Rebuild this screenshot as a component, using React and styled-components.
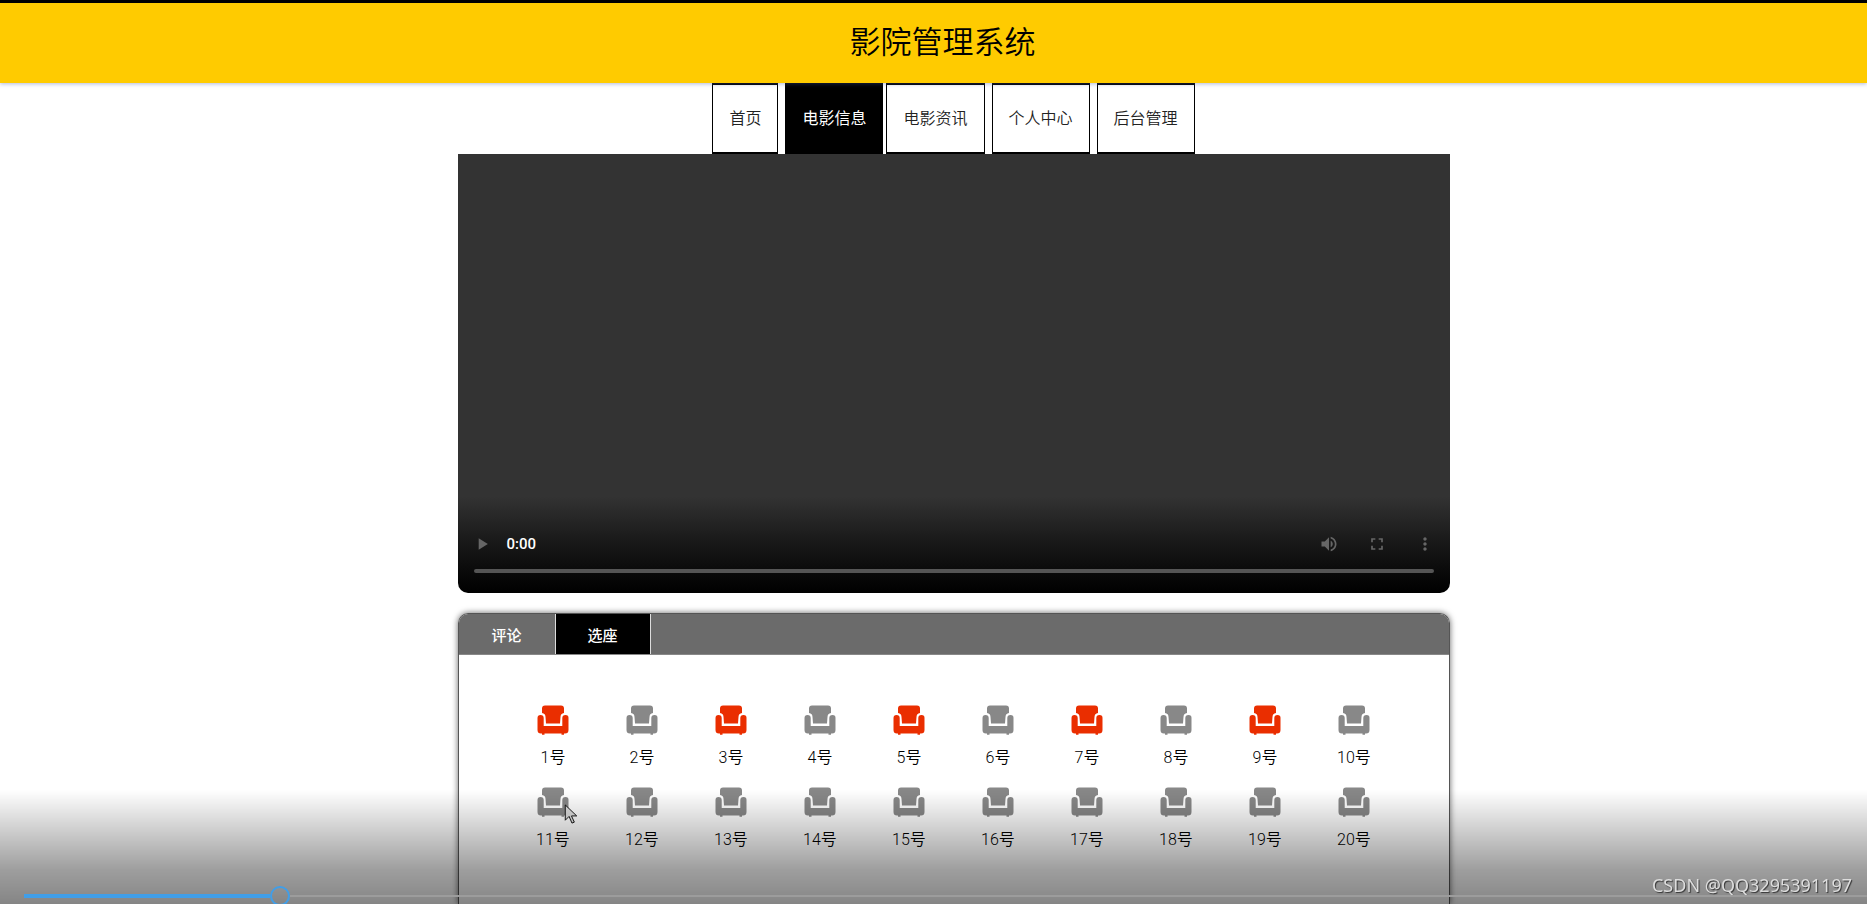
import React, { useState } from "react";
import styled, { createGlobalStyle } from "styled-components";

const GlobalStyle = createGlobalStyle`
  * {
    box-sizing: border-box;
  }
  body {
    margin: 0;
    background: #fff;
    color: #000;
    font-family: "Liberation Sans", "Noto Sans CJK SC", sans-serif;
    font-size: 16px;
    font-weight: 350;
  }
  button, input {
    font: inherit;
  }
`;

const Page = styled.div`
  display: flex;
  flex-direction: column;
  min-height: 100vh;
`;

const Header = styled.header`
  position: relative;
  z-index: 1;
  height: 83px;
  padding-left: 18px;
  display: flex;
  align-items: center;
  justify-content: center;
  background: #ffcb00;
  border-top: 3px solid #000;
  box-shadow: 0 1px 4px rgba(60, 80, 160, 0.4);
`;

const Title = styled.h1`
  margin: 0;
  font-size: 31px;
  line-height: 40px;
  font-weight: 350;
`;

const Nav = styled.nav`
  display: flex;
  justify-content: center;
  gap: 7px;
  padding-left: 40px;
`;

const NavLink = styled.a`
  padding: 0 16px;
  border: 2px solid #000;
  border-width: 2px 1px;
  margin-right: ${({ $active }) => ($active ? "-4px" : "0")};
  background: ${({ $active }) => ($active ? "#000" : "#fff")};
  color: ${({ $active }) => ($active ? "#fff" : "#222")};
  font-weight: ${({ $active }) => ($active ? "400" : "350")};
  line-height: 67px;
  text-decoration: none;
`;

const Content = styled.main`
  flex: 1;
  display: flex;
  flex-direction: column;
  gap: 20px;
  width: 100%;
  max-width: 1032px;
  margin: 0 auto;
  padding-left: 40px;
`;

const Player = styled.section`
  display: flex;
  flex-direction: column;
  justify-content: flex-end;
  height: 439px;
  padding: 0 14px 20px;
  border-radius: 0 0 10px 10px;
  background: linear-gradient(#333 78%, #1c1c1c 87%, #0c0c0c 94%, #000);
`;

const Controls = styled.div`
  display: flex;
  align-items: center;
  height: 50px;
  padding-right: 1px;
`;

const Time = styled.span`
  flex: 1;
  margin-left: 15px;
  color: #fff;
  font-family: Roboto, sans-serif;
  font-size: 15px;
  font-weight: 500;
`;

const IconButton = styled.button`
  display: flex;
  padding: 0;
  margin-left: ${({ $spaced }) => ($spaced ? "28px" : "0")};
  border: 0;
  background: none;
  color: #666;
`;

const Timeline = styled.input`
  appearance: none;
  display: block;
  height: 4px;
  margin: 0 2px;
  border-radius: 2px;
  background: #555;
  &::-webkit-slider-thumb {
    appearance: none;
    width: 0;
  }
`;

const Panel = styled.section`
  flex: 1;
  border: 1px solid #555;
  border-bottom: 0;
  border-radius: 10px 10px 0 0;
  box-shadow: 0 0 6px rgba(0, 0, 0, 0.6);
  overflow: hidden;
`;

const Tabs = styled.div`
  display: flex;
  height: 41px;
  background: #6b6b6b;
  border-bottom: 1px solid #888;
`;

const Tab = styled.button`
  flex: 0 1 ${({ $active }) => ($active ? "95px" : "97px")};
  padding: 0;
  border: 0;
  border-right: 1px solid #ddd;
  background: ${({ $active }) => ($active ? "#000" : "transparent")};
  color: #fff;
  font-size: 15px;
  font-weight: 500;
`;

const Seats = styled.div`
  display: grid;
  grid-template-columns: repeat(10, 1fr);
  row-gap: 18px;
  padding: 49px 50px;
`;

const Seat = styled.button`
  position: relative;
  display: flex;
  flex-direction: column;
  align-items: center;
  gap: 12px;
  padding: 0;
  border: 0;
  background: none;
  color: #000;
  font-family: Roboto, "Noto Sans CJK SC", sans-serif;
  line-height: 20px;
`;

const SeatIcon = styled.svg`
  width: 32px;
  height: 32px;
  fill: ${({ $taken }) => ($taken ? "#ea2e00" : "#888")};
`;

const Pointer = styled.svg`
  position: absolute;
  top: 18px;
  left: 55px;
  width: 14px;
  height: 21px;
`;

const Shade = styled.footer`
  position: fixed;
  inset: auto 0 0 0;
  z-index: 2;
  height: 114px;
  overflow: hidden;
  background: linear-gradient(
    rgba(0, 0, 0, 0),
    rgba(0, 0, 0, 0.38) 70%,
    rgba(0, 0, 0, 0.48)
  );
`;

const Progress = styled.input.attrs(({ value }) => ({
  style: { "--played": value / 1000 },
}))`
  --left: calc((100% - 20px) * var(--played));
  appearance: none;
  position: absolute;
  left: 24px;
  bottom: -2px;
  width: calc(100% - 24px);
  height: 20px;
  margin: 0;
  background:
    linear-gradient(#409ee8, #409ee8) left center / var(--left) 4px no-repeat,
    linear-gradient(#9c9c9c, #9c9c9c) right center /
      calc(100% - 20px - var(--left)) 2px no-repeat;
  &::-webkit-slider-thumb {
    appearance: none;
    width: 20px;
    height: 20px;
    border: 2px solid #409ee8;
    border-radius: 50%;
    background: transparent;
  }
`;

const Credit = styled.span`
  position: absolute;
  right: 15px;
  bottom: 8px;
  color: #ddd;
  font-family: "Noto Sans", sans-serif;
  font-size: 18px;
  font-weight: 400;
  line-height: 22px;
  text-shadow: 1px 1px 1px #333;
`;

const links = ["首页", "电影信息", "电影资讯", "个人中心", "后台管理"];
const tabs = ["评论", "选座"];
const taken = [1, 3, 5, 7, 9];
const seats = Array.from({ length: 20 }, (_, i) => i + 1);

export default function App() {
  const [tab, setTab] = useState("选座");
  const [played, setPlayed] = useState(135);

  return (
    <Page>
      <GlobalStyle />
      <Header>
        <Title>影院管理系统</Title>
      </Header>
      <Nav>
        {links.map((link) => (
          <NavLink key={link} href="#" $active={link === "电影信息"}>
            {link}
          </NavLink>
        ))}
      </Nav>

      <Content>
        {/* Trailer */}
        <Player>
          <Controls>
            <IconButton aria-label="Play">
              <svg width="20" height="20" viewBox="0 0 24 24" fill="currentColor">
                <path d="M8 5v14l11-7z" />
              </svg>
            </IconButton>
            <Time>0:00</Time>
            <IconButton aria-label="Mute">
              <svg width="20" height="20" viewBox="0 0 24 24" fill="currentColor">
                <path d="M3 9v6h4l5 5V4L7 9H3zm13.5 3c0-1.77-1.02-3.29-2.5-4.03v8.05c1.48-.73 2.5-2.25 2.5-4.02zM14 3.23v2.06c2.89.86 5 3.54 5 6.71s-2.11 5.85-5 6.71v2.06c4.01-.91 7-4.49 7-8.77s-2.99-7.86-7-8.77z" />
              </svg>
            </IconButton>
            <IconButton aria-label="Full screen" $spaced>
              <svg width="20" height="20" viewBox="0 0 24 24" fill="currentColor">
                <path d="M7 14H5v5h5v-2H7v-3zm-2-4h2V7h3V5H5v5zm12 7h-3v2h5v-5h-2v3zM14 5v2h3v3h2V5h-5z" />
              </svg>
            </IconButton>
            <IconButton aria-label="More options" $spaced>
              <svg width="20" height="20" viewBox="0 0 24 24" fill="currentColor">
                <path d="M12 8c1.100 0 2-.9 2-2s-.9-2-2-2-2 .9-2 2 .9 2 2 2zm0 2c-1.100 0-2 .9-2 2s.9 2 2 2 2-.9 2-2-.9-2-2-2zm0 6c-1.100 0-2 .9-2 2s.9 2 2 2 2-.9 2-2-.9-2-2-2z" />
              </svg>
            </IconButton>
          </Controls>
          <Timeline type="range" aria-label="Timeline" defaultValue="0" />
        </Player>

        {/* Comments and seats */}
        <Panel>
          <Tabs>
            {tabs.map((name) => (
              <Tab key={name} $active={name === tab} onClick={() => setTab(name)}>
                {name}
              </Tab>
            ))}
          </Tabs>
          {tab === "选座" && (
            <Seats>
              {seats.map((n) => (
                <Seat key={n}>
                  <SeatIcon viewBox="0 0 32 32" $taken={taken.includes(n)}>
                    <path d="M8 1.500h16q3 0 3 3v4.500q-3.500.5-3.500 4l-.5 6.500H9L8.500 13q0-3.500-3.500-4V4.500q0-3 3-3z" />
                    <path d="M3.500 11q3.200 0 3.200 3v8h18.600v-8q0-3 3.200-3t3 3v12q0 3.500-3.500 3.500h-1v1.200h-2.500v-1.200h-17v1.200H5v-1.200H4q-3.500 0-3.500-3.500V14q0-3 3-3z" />
                  </SeatIcon>
                  <span>{n}号</span>
                  {n === 11 && (
                    <Pointer viewBox="0 0 14 22">
                      <path
                        d="M1 1v16l4-4 3 7 2.500-1-3-6.500H13z"
                        fill="#ddd"
                        stroke="#111"
                      />
                    </Pointer>
                  )}
                </Seat>
              ))}
            </Seats>
          )}
        </Panel>
      </Content>

      <Shade>
        <Credit>CSDN @QQ3295391197</Credit>
        <Progress
          type="range"
          aria-label="Progress"
          min="0"
          max="1000"
          value={played}
          onChange={(e) => setPlayed(Number(e.target.value))}
        />
      </Shade>
    </Page>
  );
}
